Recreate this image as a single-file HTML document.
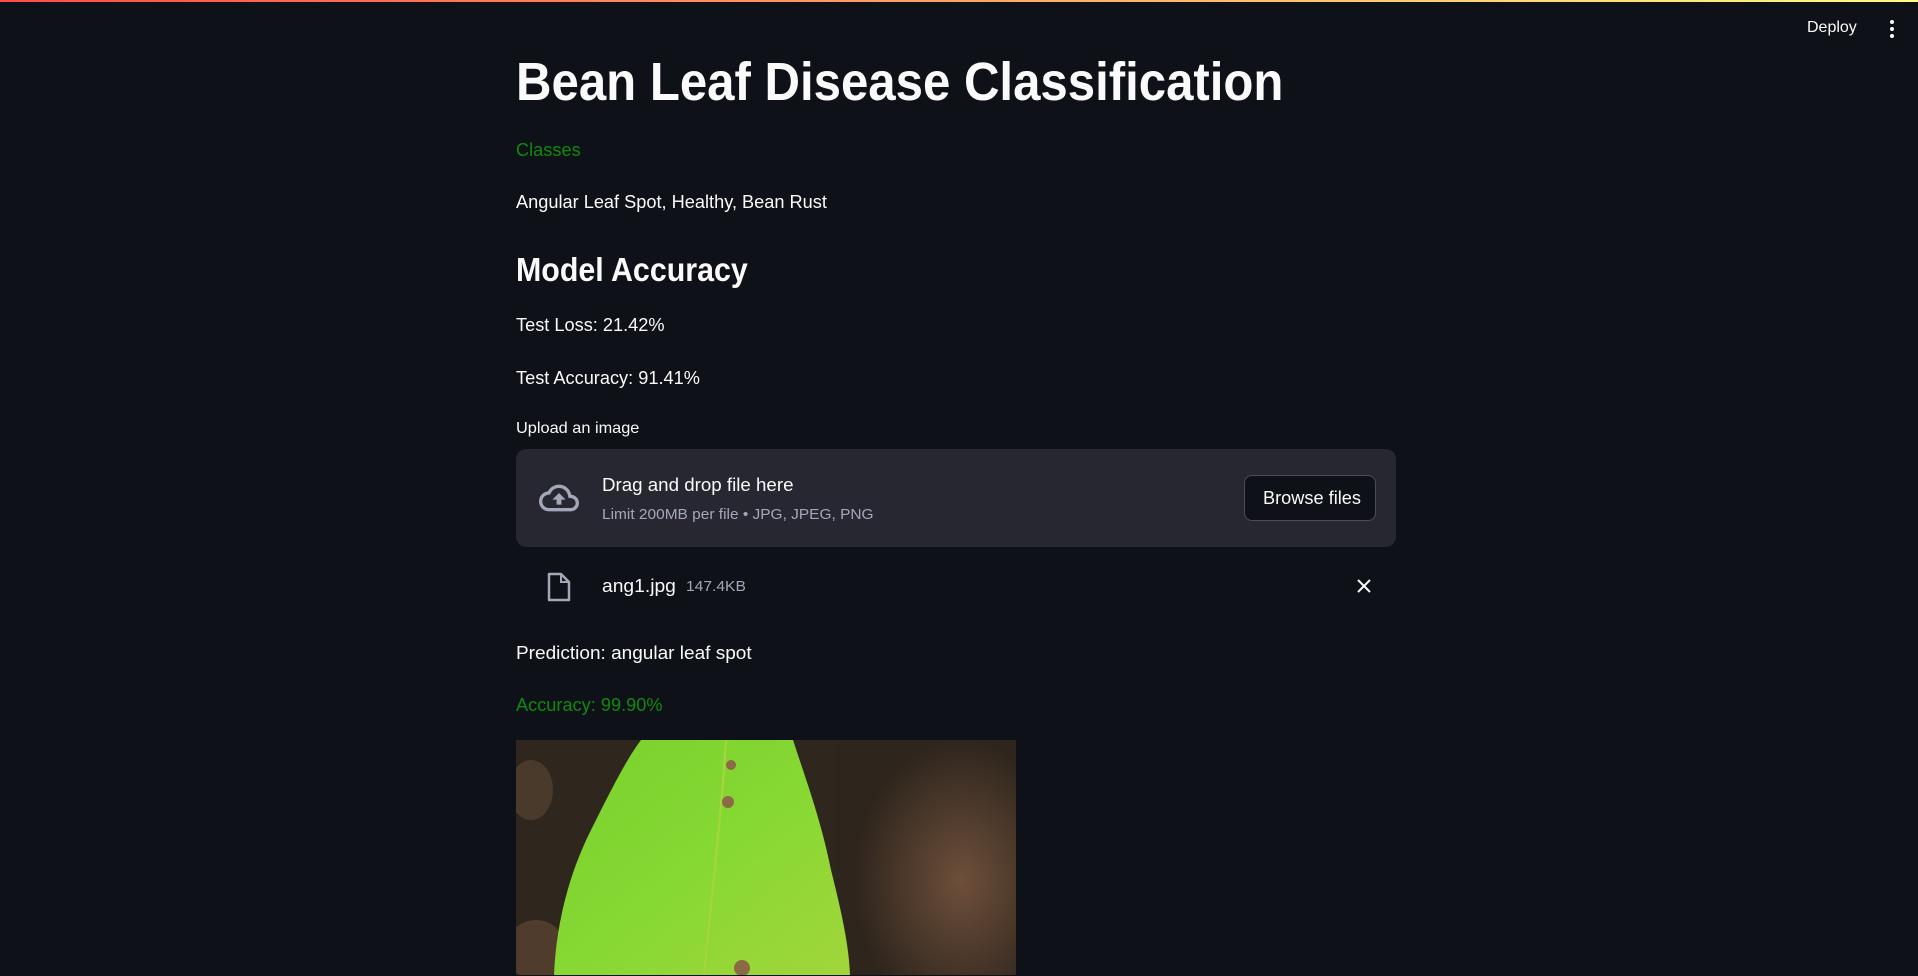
<!DOCTYPE html>
<html><head><meta charset="utf-8"><style>
html,body{margin:0;padding:0;width:1918px;height:976px;overflow:hidden;background:#0e1117;font-family:"Liberation Sans",sans-serif;color:#fafafa}
.topbar{position:absolute;top:0;left:0;width:1918px;height:2px;background:linear-gradient(90deg,#ff4b4b,#fffd80)}
.a{position:absolute;white-space:nowrap;transform-origin:left center}
.t{font-size:18px;line-height:24px;transform:scaleX(1.01)}
</style></head><body>
<div class="topbar"></div>
<div class="a" style="left:1807px;top:18px;font-size:16px;line-height:20px">Deploy</div>
<svg style="position:absolute;left:1887px;top:19px" width="10" height="20"><circle cx="5" cy="3" r="2" fill="#fafafa"/><circle cx="5" cy="10" r="2" fill="#fafafa"/><circle cx="5" cy="17" r="2" fill="#fafafa"/></svg>

<div class="a" style="left:516px;top:50px;font-size:54px;line-height:64px;font-weight:bold;transform:scaleX(.91)">Bean Leaf Disease Classification</div>
<div class="a t" style="left:516px;top:138px;color:#0f8a0f">Classes</div>
<div class="a t" style="left:516px;top:190px">Angular Leaf Spot, Healthy, Bean Rust</div>
<div class="a" style="left:516px;top:250px;font-size:33px;line-height:40px;font-weight:bold;transform:scaleX(.92)">Model Accuracy</div>
<div class="a t" style="left:516px;top:313px">Test Loss: 21.42%</div>
<div class="a t" style="left:516px;top:366px">Test Accuracy: 91.41%</div>
<div class="a" style="left:516px;top:419px;font-size:16px;line-height:20px;transform:scaleX(1.02)">Upload an image</div>

<div style="position:absolute;left:516px;top:449px;width:880px;height:98px;background:#262730;border-radius:10px"></div>
<svg style="position:absolute;left:537px;top:478px" width="44" height="40" viewBox="0 0 24 24"><path d="M19.35 10.04A7.49 7.49 0 0 0 12 4C9.11 4 6.6 5.640 5.35 8.04A5.994 5.994 0 0 0 0 14c0 3.31 2.69 6 6 6h13c2.760 0 5-2.24 5-5 0-2.64-2.05-4.78-4.65-4.96zM19 18H6c-2.21 0-4-1.79-4-4 0-2.05 1.53-3.76 3.56-3.970l1.07-.11.5-.95A5.469 5.469 0 0 1 12 6c2.62 0 4.88 1.86 5.39 4.43l.3 1.5 1.53.11A2.98 2.98 0 0 1 22 15c0 1.65-1.35 3-3 3zM8 13h2.55v3h2.9v-3H16l-4-4z" fill="#a3a8b8"/></svg>
<div class="a t" style="left:602px;top:473px;transform:scaleX(1.04)">Drag and drop file here</div>
<div class="a" style="left:602px;top:505px;font-size:15px;line-height:20px;color:#a3a8b8;transform:scaleX(1.03)">Limit 200MB per file • JPG, JPEG, PNG</div>
<div style="position:absolute;left:1244px;top:475px;width:130px;height:44px;border:1px solid #4a4c56;border-radius:8px;background:#0e1117"></div>
<div class="a t" style="left:1263px;top:486px">Browse files</div>

<svg style="position:absolute;left:546px;top:572px" width="26" height="30" viewBox="0 0 26 30"><path d="M3 2h12l8 8v18H3z" fill="none" stroke="#a3a8b8" stroke-width="2.5" stroke-linejoin="round"/><path d="M15 2v8h8" fill="none" stroke="#a3a8b8" stroke-width="2"/></svg>
<div class="a t" style="left:602px;top:574px;transform:scaleX(1.07)">ang1.jpg</div>
<div class="a" style="left:686px;top:577px;font-size:15px;line-height:20px;color:#a3a8b8;transform:scaleX(1.04)">147.4KB</div>
<svg style="position:absolute;left:1357px;top:579px" width="14" height="14"><path d="M1 1L13 13M13 1L1 13" stroke="#fafafa" stroke-width="2"/></svg>

<div class="a t" style="left:516px;top:641px;transform:scaleX(1.056)">Prediction: angular leaf spot</div>
<div class="a t" style="left:516px;top:693px;color:#0f8a0f;transform:scaleX(1.01)">Accuracy: 99.90%</div>

<svg style="position:absolute;left:516px;top:740px" width="500" height="235" viewBox="0 0 500 235">
<defs><linearGradient id="g" x1="0" y1="0" x2="1" y2="1"><stop offset="0" stop-color="#7ad12c"/><stop offset=".5" stop-color="#86d833"/><stop offset="1" stop-color="#a2d63a"/></linearGradient>
<radialGradient id="d1" cx=".7" cy=".6" r=".6"><stop offset="0" stop-color="#6e4f3a"/><stop offset="1" stop-color="#2e251d"/></radialGradient></defs>
<rect width="500" height="235" fill="#2f261e"/>
<rect x="320" width="180" height="235" fill="url(#d1)"/>
<ellipse cx="20" cy="210" rx="30" ry="30" fill="#4f3c2d"/>
<ellipse cx="15" cy="50" rx="22" ry="30" fill="#4a3a2b"/>
<path d="M125 0 L277 0 C290 40 305 80 315 130 C325 170 333 205 334 235 L38 235 C40 190 50 140 75 90 C95 50 110 20 125 0Z" fill="url(#g)"/>
<path d="M210 0 C205 80 195 160 188 235" stroke="#a8d440" stroke-width="2" fill="none"/>
<circle cx="215" cy="25" r="5" fill="#8b6a45"/><circle cx="212" cy="62" r="6" fill="#8b6a45"/><circle cx="226" cy="228" r="8" fill="#8b6a45"/>
</svg>
</body></html>
